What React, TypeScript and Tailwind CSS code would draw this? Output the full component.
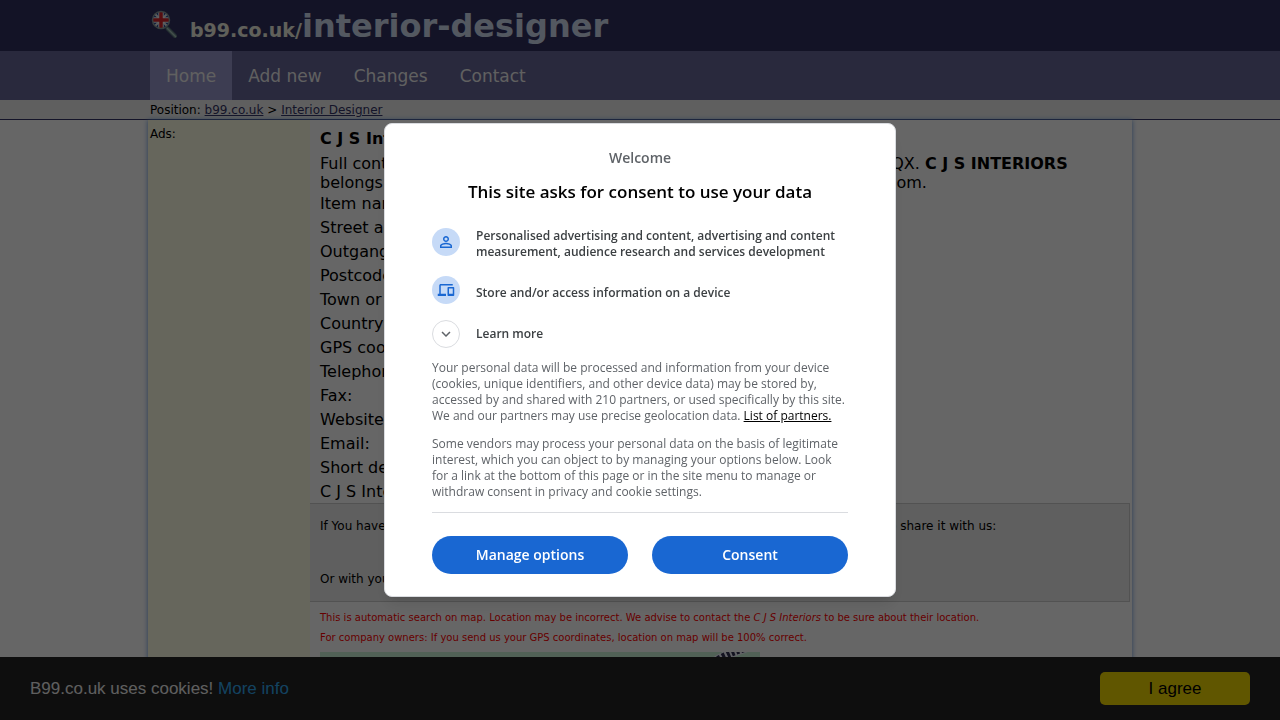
import { MdPersonOutline, MdExpandMore } from "react-icons/md";

const navItems = ["Home", "Add new", "Changes", "Contact"];

const details = [
  "Item name: C J S Interiors",
  "Street address: 12 Station Road",
  "Outgang Lane",
  "Postcode:",
  "Town or city:",
  "Country:",
  "GPS coordinates:",
  "Telephone:",
  "Fax:",
  "Website:",
  "Email:",
  "Short description:",
  "C J S Interiors",
];

function Logo() {
  return (
    <svg width="28" height="30" viewBox="0 0 28 30" aria-hidden="true">
      <path d="M17.5 19.5l7.5 7.5" stroke="#5f7f80" strokeWidth="4" strokeLinecap="round" />
      <path d="M17 19l9 9" stroke="#a9c4bb" strokeWidth="1.5" />
      <circle cx="11" cy="11" r="8.5" fill="#23459a" />
      <path d="M5 5l12 12M17 5L5 17" stroke="#e8e8e8" strokeWidth="2" />
      <path d="M11 3v16M3 11h16" stroke="#f4f4f4" strokeWidth="5.5" />
      <path d="M11 3v16M3 11h16" stroke="#d8232c" strokeWidth="3.5" />
      <circle cx="11" cy="11" r="8.5" fill="none" stroke="#8a9a9a" strokeWidth="1.5" />
    </svg>
  );
}

function DevicesIcon() {
  return (
    <svg width="18" height="18" viewBox="0 0 24 24" fill="currentColor" aria-hidden="true">
      <path d="M1 20v-3h2V6c0-1.1.9-2 2-2h16v2H5v11h7v3H1zm14 0c-.6 0-1-.4-1-1V9c0-.6.4-1 1-1h7c.6 0 1 .4 1 1v10c0 .6-.4 1-1 1h-7zm1-3h5v-7h-5v7z" />
    </svg>
  );
}

function Header() {
  return (
    <header>
      <div className="bg-[#303060]">
        <div className="mx-auto flex h-[51px] max-w-[980px] items-start">
          <span className="mt-[9px]">
            <Logo />
          </span>
          <h1 className="ml-3 whitespace-nowrap font-bold leading-[53px]">
            <span className="text-[19px] text-[#f0f0e0]">b99.co.uk/</span>
            <span className="text-[32px] text-[#d0dcf0]">interior-designer</span>
          </h1>
        </div>
      </div>
      <nav className="bg-[#666699]">
        <ul className="mx-auto flex max-w-[980px]">
          {navItems.map((item) => (
            <li key={item}>
              <a
                href="#"
                className={`block px-4 pt-px text-[17px] leading-[48px] text-[#f0f0f0] ${
                  item === "Home" ? "bg-[#9999cc]" : ""
                }`}
              >
                {item}
              </a>
            </li>
          ))}
        </ul>
      </nav>
      <div className="border-b border-[#333366] bg-[#eeeeee]">
        <p className="mx-auto max-w-[980px] pt-px text-xs leading-[18px]">
          Position:{" "}
          <a href="#" className="text-[#333366] underline">
            b99.co.uk
          </a>{" "}
          &gt;{" "}
          <a href="#" className="text-[#333366] underline">
            Interior Designer
          </a>
        </p>
      </div>
    </header>
  );
}

function MapPreview() {
  return (
    <div className="mt-1 h-40 w-[440px] bg-[#caf2d8]">
      <svg width="440" height="160" viewBox="0 0 440 160" aria-hidden="true">
        <path d="M394 10Q406 2 426 -4" fill="none" stroke="#f4f4ff" strokeWidth="9" />
        <path d="M394 10Q406 2 426 -4" fill="none" stroke="#303050" strokeWidth="7" strokeDasharray="3 2" />
      </svg>
    </div>
  );
}

function Listing() {
  return (
    <div className="mx-auto flex w-full max-w-[984px] grow bg-white shadow-[0_0_5px_#6699dd]">
      <aside className="w-[162px] shrink-0 bg-[#ffffe6] px-[2px] pt-1 text-xs leading-5">Ads:</aside>
      <main className="min-w-0 grow pr-[2px]">
        <div className="px-[10px] pt-[7px]">
          <h2 className="font-bold leading-6">C J S Interiors</h2>
          <p className="mt-[3px] leading-[19px]">
            Full contact information about C J S Interiors, Holmfirth, West Yorkshire QX.{" "}
            <b>C J S INTERIORS</b>
            <br />
            belongs to the Interior Designer category and is located in United Kingdom.
          </p>
          <ul className="-mb-px leading-6">
            {details.map((line) => (
              <li key={line}>{line}</li>
            ))}
          </ul>
        </div>
        <div className="border border-l-0 border-[#cccccc] bg-[#eeeeee] px-[10px] py-3 text-xs leading-5">
          <p>
            If You have any additional or corrected information about the C J S Interiors company, please do share it
            with us:
          </p>
          <p className="mt-[33px]">Or with your friends:</p>
        </div>
        <div className="px-[10px] pt-[6px]">
          <p className="text-[10px] leading-5 text-[#ff0000]">
            This is automatic search on map. Location may be incorrect. We advise to contact the{" "}
            <i>C J S Interiors</i> to be sure about their location.
            <br />
            For company owners: If you send us your GPS coordinates, location on map will be 100% correct.
          </p>
          <MapPreview />
        </div>
      </main>
    </div>
  );
}

function CookieBar() {
  return (
    <div className="fixed inset-x-0 bottom-0 flex items-center justify-between bg-[#232323] px-[30px] py-[15px] font-['Liberation_Sans',Arial,sans-serif] text-[17px] leading-[33px] text-[#eeeeee]">
      <p>
        B99.co.uk uses cookies!{" "}
        <a href="#" className="text-[#31a8f0]">
          More info
        </a>
      </p>
      <button type="button" className="w-[150px] rounded-[5px] bg-[#f1d600] text-black">
        I agree
      </button>
    </div>
  );
}

function ConsentDialog() {
  return (
    <div className="fixed inset-0 flex items-center justify-center bg-black/60 font-['Open_Sans',sans-serif]">
      <div
        role="dialog"
        aria-labelledby="consent-title"
        className="w-full max-w-[512px] rounded-lg border border-[#dadce0] bg-white px-[47px] pt-6 pb-[22px] shadow-lg"
      >
        <p className="text-center text-sm leading-5 font-semibold text-[#5f6368]">Welcome</p>
        <h2 id="consent-title" className="mt-3 text-center text-[17px] leading-6 font-semibold text-black">
          This site asks for consent to use your data
        </h2>
        <ul className="mt-6 space-y-4 text-xs leading-4 font-semibold text-[#3c4043]">
          <li className="flex gap-4">
            <span className="flex size-7 shrink-0 items-center justify-center rounded-full bg-[#c6daf7] text-[#1967d2]">
              <MdPersonOutline size={18} />
            </span>
            <span>
              Personalised advertising and content, advertising and content measurement, audience research and
              services development
            </span>
          </li>
          <li className="flex gap-4">
            <span className="flex size-7 shrink-0 items-center justify-center rounded-full bg-[#c6daf7] text-[#1967d2]">
              <DevicesIcon />
            </span>
            <span className="pt-[9px]">Store and/or access information on a device</span>
          </li>
          <li>
            <button type="button" className="flex items-center gap-4">
              <span className="flex size-7 shrink-0 items-center justify-center rounded-full border border-[#dadce0] text-[#5f6368]">
                <MdExpandMore size={18} />
              </span>
              Learn more
            </button>
          </li>
        </ul>
        <div className="mt-3 space-y-3 border-b border-[#dadce0] pb-3 text-xs leading-4 text-[#5f6368]">
          <p>
            Your personal data will be processed and information from your device (cookies, unique identifiers,
            and other device data) may be stored by, accessed by and shared with 210 partners, or used
            specifically by this site. We and our partners may use precise geolocation data.{" "}
            <a href="#" className="text-black underline">
              List of partners.
            </a>
          </p>
          <p>
            Some vendors may process your personal data on the basis of legitimate interest, which you can object
            to by managing your options below. Look for a link at the bottom of this page or in the site menu to
            manage or withdraw consent in privacy and cookie settings.
          </p>
        </div>
        <div className="mt-[23px] grid grid-cols-2 gap-6 text-sm leading-[38px] font-semibold text-white">
          <button type="button" className="rounded-full bg-[#1967d2]">
            Manage options
          </button>
          <button type="button" className="rounded-full bg-[#1967d2]">
            Consent
          </button>
        </div>
      </div>
    </div>
  );
}

export default function App() {
  return (
    <div className="flex h-screen flex-col overflow-hidden bg-white font-[Verdana,'DejaVu_Sans',sans-serif] text-base text-black">
      <Header />
      <Listing />
      <CookieBar />
      <ConsentDialog />
    </div>
  );
}
